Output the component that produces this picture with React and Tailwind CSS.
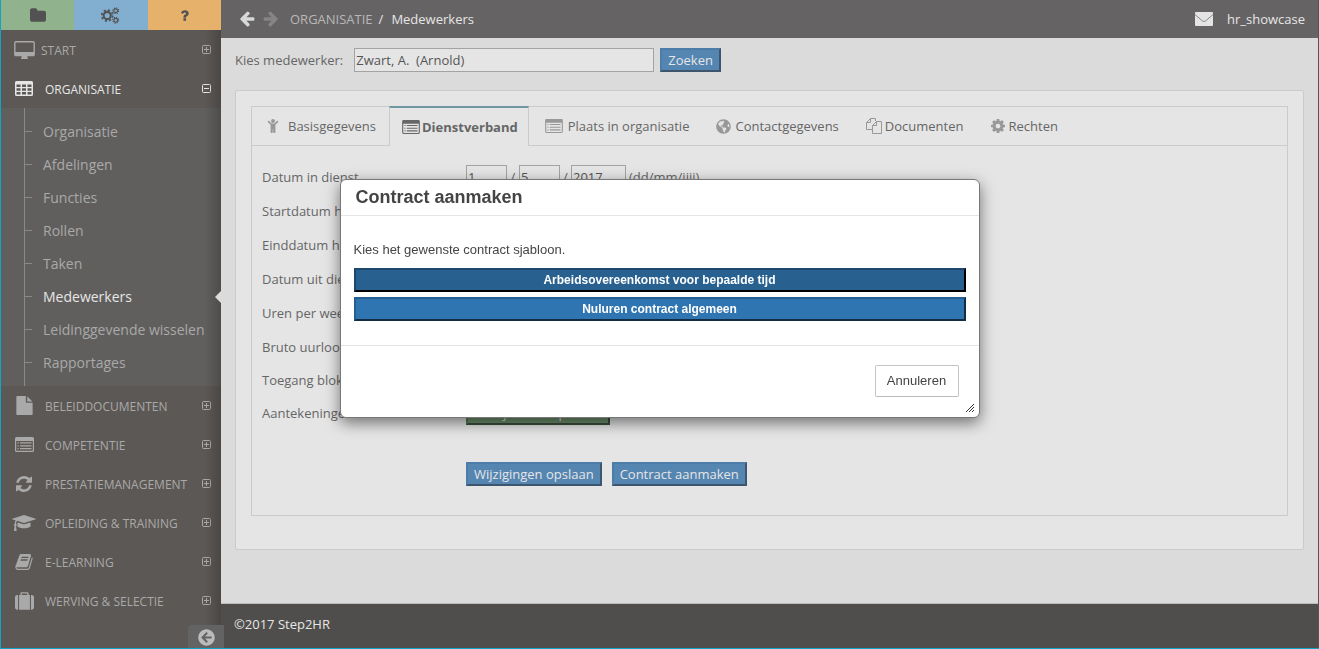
import React, { useState } from 'react';
import { FaChild, FaGlobeAmericas, FaArrowCircleLeft } from 'react-icons/fa';

const paths = {
  folder: 'M1728 608v704q0 92-66 158t-158 66h-1216q-92 0-158-66t-66-158v-960q0-92 66-158t158-66h320q92 0 158 66t66 158v32h672q92 0 158 66t66 158z',
  question: 'M1088 1256v240q0 16-12 28t-28 12h-240q-16 0-28-12t-12-28v-240q0-16 12-28t28-12h240q16 0 28 12t12 28zm316-600q0 54-15.5 101t-35 76.5-55 59.5-57.5 43.5-61 35.5q-41 23-68.5 65t-27.5 67q0 17-12 32.5t-28 15.5h-240q-15 0-25.5-18.5t-10.5-37.5v-45q0-83 65-156.5t143-108.5q59-27 84-56t25-76q0-42-46.5-74t-107.5-32q-65 0-108 29-35 25-107 115-13 16-31 16-12 0-25-8l-164-125q-13-10-15.5-25t5.5-28q160-266 464-266 80 0 161 31t146 83 106 127.5 41 158.5z',
  cog: 'M1152 896q0-106-75-181t-181-75-181 75-75 181 75 181 181 75 181-75 75-181zm512-109v222q0 12-8 23t-20 13l-185 28q-19 54-39 91 35 50 107 138 10 12 10 25t-9 23q-27 37-99 108t-94 71q-12 0-26-9l-138-108q-44 23-91 38-16 136-29 186-7 28-36 28h-222q-14 0-24.5-8.5t-11.5-21.5l-28-184q-49-16-90-37l-141 107q-10 9-25 9-14 0-25-11-126-114-165-168-7-10-7-23 0-12 8-23 15-21 51-66.5t54-70.5q-27-50-41-99l-183-27q-13-2-21-12.5t-8-23.5v-222q0-12 8-23t19-13l186-28q14-46 39-92-40-57-107-138-10-12-10-24 0-10 9-23 26-36 98.5-107.5t94.5-71.5q13 0 26 10l138 107q44-23 91-38 16-136 29-186 7-28 36-28h222q14 0 24.5 8.5t11.5 21.5l28 184q49 16 90 37l142-107q9-9 24-9 13 0 25 10 129 119 165 170 7 8 7 22 0 12-8 23-15 21-51 66.5t-54 70.5q26 50 41 98l183 28q13 2 21 12.5t8 23.5z',
  arrow: 'M1664 896v128q0 53-32.5 90.5t-84.5 37.5h-704l293 294q38 36 38 90t-38 90l-75 76q-37 37-90 37-52 0-91-37l-651-652q-37-37-37-90 0-52 37-91l651-650q38-38 91-38 52 0 90 38l75 74q38 38 38 91t-38 91l-293 293h704q52 0 84.5 37.5t32.5 90.5z',
  desktop: 'M1728 992v-832q0-13-9.5-22.5t-22.5-9.5h-1600q-13 0-22.5 9.5t-9.5 22.5v832q0 13 9.5 22.5t22.5 9.5h1600q13 0 22.5-9.5t9.5-22.5zm128-832v1088q0 66-47 113t-113 47h-544q0 37 16 77.5t32 71 16 43.5q0 26-19 45t-45 19h-512q-26 0-45-19t-19-45q0-14 16-44t32-70 16-78h-544q-66 0-113-47t-47-113v-1088q0-66 47-113t113-47h1600q66 0 113 47t47 113z',
  file: 'M1152 512v-472q22 14 36 28l408 408q14 14 28 36h-472zm-128 32q0 40 28 68t68 28h544v1056q0 40-28 68t-68 28h-1344q-40 0-68-28t-28-68v-1600q0-40 28-68t68-28h800v544z',
  refresh: 'M1639 1056q0 5-1 7-64 268-268 434.5t-478 166.5q-146 0-282.5-55t-243.5-157l-129 129q-19 19-45 19t-45-19-19-45v-448q0-26 19-45t45-19h448q26 0 45 19t19 45-19 45l-137 137q71 66 161 102t187 36q134 0 250-65t186-179q11-17 53-117 8-23 30-23h192q13 0 22.5 9.5t9.5 22.5zm25-800v448q0 26-19 45t-45 19h-448q-26 0-45-19t-19-45 19-45l138-138q-148-137-349-137-134 0-250 65t-186 179q-11 17-53 117-8 23-30 23h-199q-13 0-22.5-9.5t-9.5-22.5v-7q65-268 270-434.5t480-166.5q146 0 284 55.5t245 156.5l130-129q19-19 45-19t45 19 19 45z',
  graduation: 'M1774 836l18 316q4 69-82 128t-235 93.5-323 34.5-323-34.5-235-93.5-82-128l18-316 574 181q22 7 48 7t48-7zm530-324q0 23-22 31l-1120 352q-4 1-10 1t-10-1l-652-206q-43 34-71 111.5t-34 178.5q63 36 63 109 0 69-58 107l58 433q2 14-8 25-9 11-24 11h-192q-15 0-24-11-10-11-8-25l58-433q-58-38-58-107 0-73 65-111 11-207 98-330l-333-104q-22-8-22-31t22-31l1120-352q4-1 10-1t10 1l1120 352q22 8 22 31z',
  book: 'M1703 478q40 57 18 129l-275 906q-19 64-76.5 107.5t-122.5 43.5h-923q-77 0-148.5-53.5t-99.5-131.5q-24-67-2-127 0-4 3-27t4-37q1-8-3-21.5t-3-19.5q2-11 8-21t16.5-23.5 16.5-23.5q23-38 45-91.5t30-91.5q3-10 .5-30t-.5-28q3-11 17-28t17-23q21-36 42-92t25-90q1-9-2.5-32t.5-28q4-13 22-30.5t22-22.5q19-26 42.5-84.5t27.5-96.5q1-8-3-25.5t-2-26.5q2-8 9-18t18-23 17-21q8-12 16.5-30.5t15-35 16-36 19.5-32 26.5-23.5 36-11.5 47.5 5.5l-1 3q38-9 51-9h761q74 0 114 56t18 130l-274 906q-36 119-71.5 153.5t-128.5 34.5h-869q-27 0-38 15-11 16-1 43 24 70 144 70h923q29 0 56-15.5t35-41.5l300-987q7-22 5-57 38 15 59 43zm-1064 2q-4 13 2 22.5t20 9.5h608q13 0 25.5-9.5t16.5-22.5l21-64q4-13-2-22.5t-20-9.5h-608q-13 0-25.5 9.5t-16.5 22.5zm-83 256q-4 13 2 22.5t20 9.5h608q13 0 25.5-9.5t16.5-22.5l21-64q4-13-2-22.5t-20-9.5h-608q-13 0-25.5 9.5t-16.5 22.5z',
  suitcase: 'M640 256h512v-128h-512v128zm-352 0v1408h-64q-92 0-158-66t-66-158v-960q0-92 66-158t158-66h64zm1120 0v1408h-1024v-1408h128v-160q0-40 28-68t68-28h576q40 0 68 28t28 68v160h128zm384 224v960q0 92-66 158t-158 66h-64v-1408h64q92 0 158 66t66 158z',
};

function Glyph({ name, box = '0 0 1792 1792', className }) {
  return (
    <svg viewBox={box} fill="currentColor" className={className} aria-hidden="true">
      <path d={paths[name]} />
    </svg>
  );
}

function Cogs({ className }) {
  return (
    <svg viewBox="0 0 20 18" fill="none" stroke="currentColor" className={className} aria-hidden="true">
      <circle cx="6.5" cy="9" r="3.8" strokeWidth="2.2" />
      <circle cx="6.5" cy="9" r="5.8" strokeWidth="1.8" strokeDasharray="2.28 2.28" />
      <circle cx="15.5" cy="4" r="2" strokeWidth="1.2" />
      <circle cx="15.5" cy="4" r="3.1" strokeWidth="1.2" strokeDasharray="1.22 1.22" />
      <circle cx="15.5" cy="14" r="2" strokeWidth="1.2" />
      <circle cx="15.5" cy="14" r="3.1" strokeWidth="1.2" strokeDasharray="1.22 1.22" />
    </svg>
  );
}

function TableIcon({ className }) {
  return (
    <svg viewBox="0 0 18 15" fill="currentColor" className={className} aria-hidden="true">
      <path fillRule="evenodd" d="M1.500 0h15Q18 0 18 1.500v12Q18 15 16.500 15h-15Q0 15 0 13.500v-12Q0 0 1.500 0zM1.500 3.500v2.500h4v-2.500zM7 3.500v2.500h4v-2.500zM12.500 3.500v2.500h4v-2.500zM1.500 7.200v2.500h4v-2.500zM7 7.200v2.500h4v-2.500zM12.500 7.200v2.500h4v-2.500zM1.500 11v2.500h4v-2.500zM7 11v2.500h4v-2.500zM12.500 11v2.500h4v-2.500z" />
    </svg>
  );
}

function ListIcon({ className }) {
  return (
    <svg viewBox="0 0 19 15" fill="currentColor" className={className} aria-hidden="true">
      <path fillRule="evenodd" d="M1.500 0h16Q19 0 19 1.500v12Q19 15 17.500 15h-16Q0 15 0 13.500v-12Q0 0 1.500 0zM1.200 4v9.200q0 .6.600.600h15.400q.6 0 .6-.6v-9.200z" />
      <path d="M2.500 5.300h1.200v1.200h-1.200zM5 5.300h11.500v1.200h-11.500zM2.500 8.200h1.200v1.200h-1.200zM5 8.200h11.500v1.200h-11.500zM2.500 11h1.200v1.200h-1.200zM5 11h11.500v1.200h-11.500z" />
    </svg>
  );
}

function CopyIcon({ className }) {
  return (
    <svg viewBox="0 0 16 16" fill="none" stroke="currentColor" className={className} aria-hidden="true">
      <path d="M6 11.500H.5V4.500L4.500.5H9.500V3M4.500.5V4.500H.5M10.500 3.500H15.500V15.500H6.500V7.500zM10.500 3.500V7.500H6.500" />
    </svg>
  );
}

function ToggleIcon({ open }) {
  return (
    <svg viewBox="0 0 9 9" fill="none" stroke="currentColor" className="size-[9px]" aria-hidden="true">
      <rect x=".5" y=".5" width="8" height="8" rx="1" />
      <path d={open ? 'M2 4.500H7' : 'M2 4.500H7M4.500 2V7'} />
    </svg>
  );
}

const subItems = ['Organisatie', 'Afdelingen', 'Functies', 'Rollen', 'Taken', 'Medewerkers', 'Leidinggevende wisselen', 'Rapportages'];

const menu = [
  { label: 'START', icon: <Glyph name="desktop" box="-64 0 1920 1664" className="h-[18px] w-[21px]" /> },
  { label: 'ORGANISATIE', icon: <TableIcon className="h-[15px] w-[18px]" />, children: subItems },
  { label: 'BELEIDDOCUMENTEN', icon: <Glyph name="file" box="128 0 1536 1792" className="h-[19px] w-[17px]" /> },
  { label: 'COMPETENTIE', icon: <ListIcon className="h-[15px] w-[19px]" /> },
  { label: 'PRESTATIEMANAGEMENT', icon: <Glyph name="refresh" box="128 128 1536 1536" className="size-4" /> },
  { label: 'OPLEIDING & TRAINING', icon: <Glyph name="graduation" box="0 128 2304 1536" className="h-4 w-6" /> },
  { label: 'E-LEARNING', icon: <Glyph name="book" box="64 128 1664 1536" className="h-4 w-[18px]" /> },
  { label: 'WERVING & SELECTIE', icon: <Glyph name="suitcase" box="0 0 1792 1664" className="h-[18px] w-[19px]" /> },
];

const tabs = [
  { label: 'Basisgegevens', pad: 'pr-[13px] pl-[14px]', icon: <FaChild className="mr-2 size-[14px] text-[#989898]" /> },
  { label: 'Dienstverband', icon: <ListIcon className="mr-0.5 h-[14px] w-[18px] text-[#666]" /> },
  { label: 'Plaats in organisatie', pad: 'pr-[14px] pl-4', icon: <ListIcon className="mr-[5px] h-[14px] w-[18px] text-[#989898]" /> },
  { label: 'Contactgegevens', pad: 'px-[13px]', icon: <FaGlobeAmericas className="mr-1 size-[15px] text-[#989898]" /> },
  { label: 'Documenten', pad: 'px-[14px]', icon: <CopyIcon className="mr-[3px] size-4 text-[#989898]" /> },
  { label: 'Rechten', pad: 'px-[13px]', icon: <Glyph name="cog" box="128 128 1536 1536" className="mr-1 size-[14px] text-[#989898]" /> },
];

const dateRows = ['Startdatum huidig', 'Einddatum huidig', 'Datum uit dienst', 'Uren per week', 'Bruto uurloon'];

const outset = 'h-6 border-2 px-1.5 text-[13px] leading-5';
const blueButton = `${outset} border-t-[#4b7da8] border-l-[#4b7da8] border-r-[#3d566e] border-b-[#3d566e] bg-[#5585b1] text-[#e6e6e6]`;
const field = 'h-6 border border-[#a3a3a3] bg-[#e5e5e5] px-px text-[13px] leading-5 text-[#555]';

function Sidebar() {
  return (
    <aside className="relative flex w-[220px] shrink-0 flex-col bg-[#5c5855] text-[#a9a9a9]">
      <div className="grid h-[30px] grid-cols-3 text-[#525252]">
        <button aria-label="Mappen" className="flex items-center justify-center bg-[#90b28d]">
          <Glyph name="folder" box="64 128 1664 1408" className="h-[14px] w-4" />
        </button>
        <button aria-label="Instellingen" className="flex items-center justify-center bg-[#82aed0]">
          <Cogs className="h-[17px] w-[19px]" />
        </button>
        <button aria-label="Help" className="flex items-center justify-center bg-[#e6b26b]">
          <Glyph name="question" className="size-[15px]" />
        </button>
      </div>
      <nav className="flex flex-col">
        {menu.map((m) => (
          <div key={m.label}>
            <button
              aria-expanded={Boolean(m.children)}
              className={`flex h-[39px] w-full items-center pr-2.5 pl-[11px] text-left text-xs ${m.children ? 'text-[#e6e6e6]' : ''}`}
            >
              <span className="flex w-6 shrink-0 justify-center">{m.icon}</span>
              <span className={m.label === 'START' ? 'ml-[5px] flex-1 pt-0.5' : 'ml-[9px] flex-1 pt-0.5'}>{m.label}</span>
              <ToggleIcon open={Boolean(m.children)} />
            </button>
            {m.children && (
              <div className="bg-[#605f5d] pl-[23px]">
                <ul className="border-l border-[#8a8a8a] py-[7px] text-sm">
                  {m.children.map((s) => (
                    <li key={s} className="relative flex h-[33px] items-center">
                      <span className="h-px w-[7px] bg-[#8a8a8a]" />
                      <a href="#" className={`ml-[11px] whitespace-nowrap ${s === 'Medewerkers' ? 'font-medium text-[#e6e6e6]' : ''}`}>{s}</a>
                      {s === 'Medewerkers' && (
                        <svg viewBox="0 0 6 12" className="absolute right-0 z-10 h-3 w-1.5 fill-[#dcdcdc]" aria-hidden="true">
                          <path d="M6 0V12L0 6z" />
                        </svg>
                      )}
                    </li>
                  ))}
                </ul>
              </div>
            )}
          </div>
        ))}
      </nav>
      <div className="pointer-events-none absolute top-[30px] right-0 bottom-0 w-4 bg-linear-to-r from-transparent to-black/20" />
      <button aria-label="Menu inklappen" className="absolute -right-[3px] bottom-0 z-10 flex h-[23px] w-9 items-center justify-center rounded-tl bg-[#636363] pt-0.5 text-[#bbb]">
        <FaArrowCircleLeft className="size-[17px]" />
      </button>
    </aside>
  );
}

function Header() {
  return (
    <header className="flex h-[38px] items-center bg-[#666364] pr-[13px] pl-[18px] text-[13px] text-[#e6e6e6]">
      <button aria-label="Terug"><Glyph name="arrow" box="128 128 1536 1664" className="size-4 text-[#d8d8d8]" /></button>
      <button aria-label="Vooruit" className="ml-2"><Glyph name="arrow" box="128 128 1536 1664" className="size-4 -scale-x-100 text-[#858585]" /></button>
      <nav className="ml-[11px] flex-1">
        <a href="#" className="text-[#b8b8b8]">ORGANISATIE</a>
        <span className="mr-2 ml-1.5">/</span>
        <span>Medewerkers</span>
      </nav>
      <svg viewBox="0 0 18 14" className="mr-3.5 h-[14px] w-[18px]" aria-hidden="true">
        <rect width="18" height="14" rx="1" fill="#e4e4e4" />
        <path d="M0 2.500L7.500 9Q9 10 10.500 9L18 2.500" fill="none" stroke="#8a8888" />
      </svg>
      <a href="#">hr_showcase</a>
    </header>
  );
}

function Dialog({ onClose }) {
  const templateButton = 'h-6 w-full border-2 text-center text-xs font-bold leading-5 text-white';
  return (
    <div className="fixed inset-0 z-20 flex items-start justify-center pt-[179px]">
      <div
        role="dialog"
        aria-labelledby="dialog-title"
        className="relative w-[640px] rounded-md border border-[#777] bg-white font-['Liberation_Sans',Arial,sans-serif] text-[#444] shadow-[0_5px_15px_rgba(0,0,0,0.5)]"
      >
        <h2 id="dialog-title" className="h-9 border-b border-[#e5e5e5] px-[15px] pt-px text-lg leading-8 font-bold">Contract aanmaken</h2>
        <div className="flex h-[130px] flex-col border-b border-[#e5e5e5] px-[13px] pt-6">
          <p className="mb-2 text-[13px] leading-5">Kies het gewenste contract sjabloon.</p>
          <button className={`${templateButton} mb-[5px] border-t-[#1d486b] border-r-black border-b-black border-l-[#1d486b] bg-[#286090]`}>
            Arbeidsovereenkomst voor bepaalde tijd
          </button>
          <button className={`${templateButton} border-t-[#265f8f] border-r-[#122d44] border-b-[#122d44] border-l-[#265f8f] bg-[#2f75b1]`}>
            Nuluren contract algemeen
          </button>
        </div>
        <div className="flex h-[71px] items-start justify-end pt-[19px] pr-5">
          <button onClick={onClose} className="h-8 w-21 rounded-xs border border-[#c4c4c4] border-b-[#bbb] bg-white text-[13px]">Annuleren</button>
        </div>
        <svg viewBox="0 0 8 8" className="absolute right-[5px] bottom-[5px] size-2 stroke-[#333]" aria-hidden="true">
          <path d="M0 8L8 0M3 8L8 3M6 8L8 6" />
        </svg>
      </div>
    </div>
  );
}

export default function App() {
  const [dialogOpen, setDialogOpen] = useState(true);

  return (
    <div className="flex min-h-screen border-b border-l border-[#15a3c4] bg-[#dbdbdb] font-['Open_Sans',sans-serif] text-[13px] leading-5 text-[#666]">
      <Sidebar />
      <div className="flex min-w-0 flex-1 flex-col border-r border-r-[#555]">
        <Header />
        <main className="flex-1 px-[14px] pt-2.5 pb-[53px]">
          <div className="flex items-center">
            <label htmlFor="employee" className="mr-[11px]">Kies medewerker:</label>
            <input id="employee" defaultValue="Zwart, A.  (Arnold)" className={`${field} w-[300px]`} />
            <button className={`${blueButton} ml-1.5`}>Zoeken</button>
          </div>

          <section className="mt-[18px] rounded-xs border border-[#cbcbcb] bg-[#e5e5e5] px-[15px] pt-[15px] pb-[33px]">
            <div className="border border-t-0 border-[#cbcbcb] pb-[29px]">
              <div role="tablist" className="flex">
                {tabs.map((t) => {
                  const active = t.label === 'Dienstverband';
                  return (
                    <button
                      key={t.label}
                      role="tab"
                      aria-selected={active}
                      className={`flex h-10 items-center whitespace-nowrap ${active ? 'border-x border-t-2 border-x-[#cbcbcb] border-t-[#6f97a3] pr-2.5 pl-3 font-bold' : `border-y border-[#cbcbcb] ${t.pad}`}`}
                    >
                      {t.icon}
                      {t.label}
                    </button>
                  );
                })}
                <div className="flex-1 border-y border-[#cbcbcb]" />
              </div>

              <form className="px-2.5 pt-[14px]">
                <div className="flex h-[34px] items-center">
                  <label htmlFor="day" className="w-[204px]">Datum in dienst</label>
                  <input id="day" defaultValue="1" className={`${field} w-[41px]`} />
                  <span className="w-3 text-center">/</span>
                  <input aria-label="Maand" defaultValue="5" className={`${field} w-[41px]`} />
                  <span className="w-[11px] text-center">/</span>
                  <input aria-label="Jaar" defaultValue="2017" className={`${field} w-[55px]`} />
                  <span className="ml-[3px]">(dd/mm/jjjj)</span>
                </div>
                {dateRows.map((r) => (
                  <div key={r} className="flex h-[34px] items-center">
                    <label htmlFor={r} className="w-[204px]">{r}</label>
                    <input id={r} className={`${field} w-[120px]`} />
                  </div>
                ))}
                <div className="flex h-8 items-center">
                  <label htmlFor="blocked" className="w-[204px]">Toegang blokkeren</label>
                  <input id="blocked" type="checkbox" />
                </div>
                <div className="flex h-[33px] items-center">
                  <span className="w-[204px]">Aantekeningen</span>
                  <button type="button" className={`${outset} w-36 border-[#5a7a5a] border-r-[#3b4b3b] border-b-[#3b4b3b] bg-[#6c8f6c] text-[#e6e6e6]`}>Bekijken en opslaan</button>
                </div>
                <div className="mt-[33px] ml-[204px] flex gap-2.5">
                  <button type="button" className={blueButton}>Wijzigingen opslaan</button>
                  <button type="button" className={blueButton} onClick={() => setDialogOpen(true)}>Contract aanmaken</button>
                </div>
              </form>
            </div>
          </section>
        </main>
        <footer className="flex h-[45px] items-center border-t border-[#bdbdbd] bg-[#4f4e4c] px-[13px] pb-1 text-[#e6e6e6]">
          ©2017 Step2HR
        </footer>
      </div>
      {dialogOpen && <Dialog onClose={() => setDialogOpen(false)} />}
    </div>
  );
}
